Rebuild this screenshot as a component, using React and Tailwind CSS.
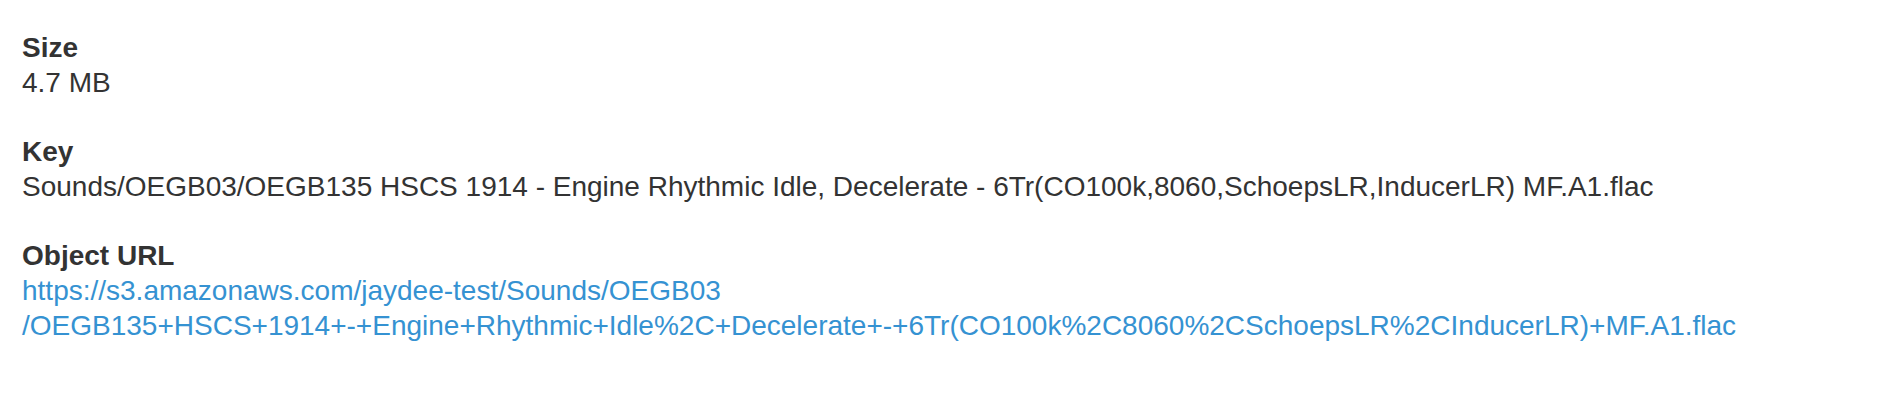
import React from 'react';

const fields = [
  { label: 'Size', value: '4.7 MB' },
  {
    label: 'Key',
    value:
      'Sounds/OEGB03/OEGB135 HSCS 1914 - Engine Rhythmic Idle, Decelerate - 6Tr(CO100k,8060,SchoepsLR,InducerLR) MF.A1.flac',
  },
];

export default function App() {
  return (
    <div className="w-[1898px] h-[408px] bg-white pl-[22px] pt-[30px] text-[28px] leading-[35px] text-[#333333] font-['Liberation_Sans',Arial,sans-serif]">
      {fields.map((f) => (
        <div key={f.label} className="mb-[34px]">
          <div className="font-bold">{f.label}</div>
          <div>{f.value}</div>
        </div>
      ))}
      <div>
        <div className="font-bold">Object URL</div>
        <a href="#" className="block text-[#3592d2]">
          <span className="block">https://s3.amazonaws.com/jaydee-test/Sounds/OEGB03</span>
          <span className="block">
            /OEGB135+HSCS+1914+-+Engine+Rhythmic+Idle%2C+Decelerate+-+6Tr(CO100k%2C8060%2CSchoepsLR%2CInducerLR)+MF.A1.flac
          </span>
        </a>
      </div>
    </div>
  );
}
